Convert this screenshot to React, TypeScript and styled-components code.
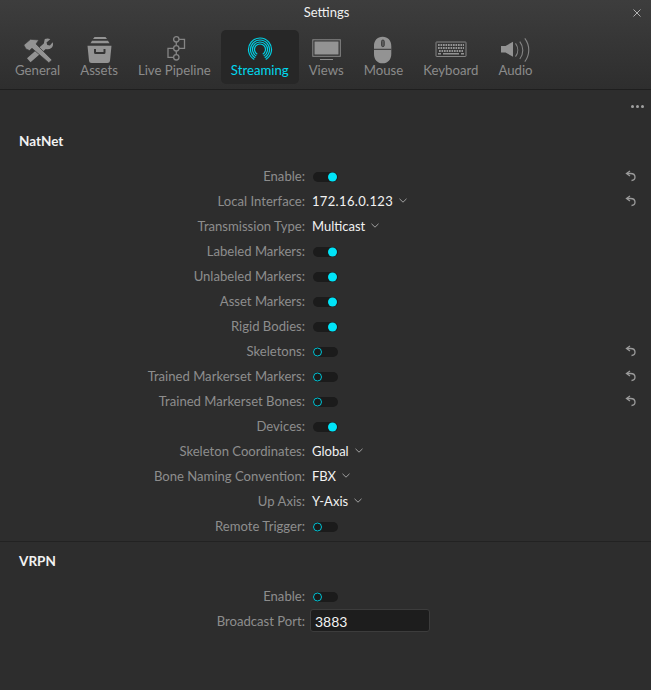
import * as React from "react";
import styled, { createGlobalStyle } from "styled-components";

const GlobalStyle = createGlobalStyle`
  html, body {
    margin: 0;
    padding: 0;
    background: #2d2d2d;
  }
  * {
    box-sizing: border-box;
  }
`;

const Window = styled.div`
  width: 651px;
  height: 690px;
  overflow: hidden;
  background: #2d2d2d;
  font-family: Lato, "Open Sans", sans-serif;
  font-size: 13.1px;
  color: #8d8d8d;
`;

const Header = styled.div`
  height: 90px;
  background: linear-gradient(#3d3d3d, #2e2e2e);
  border-bottom: 1px solid #1e1e1e;
  position: relative;
`;

const Title = styled.div`
  height: 30px;
  padding: 4px 0 0 2px;
  text-align: center;
  color: #f0f0f0;
  font-size: 13px;
  line-height: 16px;
`;

const Close = styled.svg`
  position: absolute;
  top: 9px;
  right: 10px;
  width: 8px;
  height: 8px;
`;

const Tabs = styled.div`
  display: flex;
  padding-left: 5px;
`;

const Tab = styled.div<{ $active?: boolean }>`
  height: 54px;
  padding: 5px 10px 0;
  display: flex;
  flex-direction: column;
  align-items: center;
  border-radius: 5px;
  font-size: 13.2px;
  line-height: 14px;
  white-space: nowrap;
  background: ${(p) => (p.$active ? "#272727" : "transparent")};
  color: ${(p) => (p.$active ? "#00d8ee" : "#8b8b8b")};
`;

const TabIcon = styled.svg`
  width: 32px;
  height: 28px;
  flex: none;
  overflow: visible;
`;

const Toolbar = styled.div`
  height: 41px;
  display: flex;
  justify-content: flex-end;
  align-items: flex-start;
  gap: 2px;
  padding: 15px 7px 0 0;
`;

const Dot = styled.span`
  width: 3px;
  height: 3px;
  border-radius: 50%;
  background: #a0a0a0;
`;

const SectionTitle = styled.div`
  padding-left: 19px;
  height: 20px;
  line-height: 20px;
  font-size: 13.5px;
  font-weight: 700;
  color: #f2f2f2;
`;

const Rows = styled.div<{ $top: number }>`
  margin-top: ${(p) => p.$top}px;
`;

const Row = styled.div`
  height: 25px;
  display: grid;
  grid-template-columns: 305px 1fr 24px;
  align-items: center;
  padding-right: 14px;
`;

const Label = styled.div`
  text-align: right;
  white-space: nowrap;
  line-height: 16px;
`;

const Value = styled.div`
  display: flex;
  align-items: center;
  gap: 6px;
  padding-left: 7px;
  color: #f2f2f2;
  font-size: 13px;
`;

const Address = styled.span`
  letter-spacing: 0.33px;
`;

const ToggleTrack = styled.div`
  position: relative;
  margin: 3px 0 0 1px;
  width: 25px;
  height: 10px;
  border-radius: 5px;
  background: #1b1b1b;
`;

const ToggleKnob = styled.span<{ $on: boolean }>`
  position: absolute;
  top: 50%;
  left: ${(p) => (p.$on ? "15px" : "0")};
  width: 9px;
  height: 9px;
  transform: translateY(-50%);
  border-radius: 50%;
  background: ${(p) => (p.$on ? "#00e4f8" : "#1b1b1b")};
  border: ${(p) => (p.$on ? "none" : "1px solid #00c2d4")};
`;

const ResetIcon = styled.svg`
  width: 12px;
  height: 12px;
  justify-self: end;
`;

const Divider = styled.div`
  height: 1px;
  margin-top: 3px;
  background: #222;
`;

const PortInput = styled.div`
  width: 120px;
  height: 23px;
  margin-left: -2px;
  padding-left: 4px;
  line-height: 23px;
  background: #1d1d1d;
  border: 1px solid #3c3c3c;
  border-radius: 3px;
  color: #f2f2f2;
  font-size: 14px;
`;

const Chevron = () => (
  <svg width="8" height="5" viewBox="0 0 8 5">
    <path d="M.5.8 4 4.2 7.5.8" fill="none" stroke="#a0a0a0" strokeWidth="1" />
  </svg>
);

const Reset = () => (
  <ResetIcon viewBox="0 0 12 12">
    <path d="M5 1 1.5 3.5 5 6" fill="none" stroke="#9a9a9a" strokeWidth="1.3" />
    <path d="M2 3.5h3.5c3 0 4.5 1.6 4.5 3.6S8.6 10.500 6.5 10.500" fill="none" stroke="#9a9a9a" strokeWidth="1.3" />
  </ResetIcon>
);

const Toggle = ({ on }: { on: boolean }) => (
  <ToggleTrack>
    <ToggleKnob $on={on} />
  </ToggleTrack>
);

const G = "#939393";

const tabs = [
  {
    name: "General",
    icon: (
      <>
        <path d="M5 23.300 21.800 8.500 22.800 4c2-.9 4-.8 5.500.2L24.500 7.500l.8 2.500 2.600.6 2.800-3.300c.8 2.400.2 4.500-1.400 5.800-1.500 1.200-3.500 1.500-5.500 1L8.500 27.300z" fill={G} />
        <path d="M1.800 10 8.500 4.300l8.300.7-2.800 4L30 25l-3.200 2.700L10 13.300 7.500 15.500 4 14z" fill={G} stroke="#383838" strokeWidth=".7" />
      </>
    ),
  },
  {
    name: "Assets",
    icon: (
      <>
        <path d="M11.500 2h11l1.500 2H10z" fill={G} />
        <path d="M9 5.700h16l1.500 2.500h-19z" fill={G} />
        <path
          fillRule="evenodd"
          d="M4.500 10.700h24l-1.500 15a2.500 2.500 0 0 1-2.500 2.300h-16A2.500 2.500 0 0 1 6 25.700zM11 14v3.500a1.500 1.500 0 0 0 1.500 1.500h8.500a1.500 1.500 0 0 0 1.500-1.500V14h-2v3h-7.500v-3z"
          fill={G}
        />
      </>
    ),
  },
  {
    name: "Live Pipeline",
    icon: (
      <g fill="none" stroke="#858585" strokeWidth="1.3">
        <circle cx="18.300" cy="4.300" r="2.700" />
        <circle cx="18.300" cy="13.300" r="2.700" />
        <circle cx="18.300" cy="22.300" r="2.700" />
        <path d="M18.300 7v3.600M18.300 16v3.600M21 4.300h5.500v9H21M15.600 13.300H10v9h5.600" />
      </g>
    ),
  },
  {
    name: "Streaming",
    active: true,
    icon: (
      <g fill="none" stroke="#00d0e4" strokeWidth="1.2">
        <path d="M10.250 24.460A11.500 11.500 0 1 1 21.750 24.460" />
        <path d="M11.250 22.730A9.500 9.500 0 1 1 20.750 22.730" />
        <path d="M12.250 21A7.500 7.500 0 1 1 19.750 21" />
        <path d="M13.250 19.260A5.500 5.500 0 1 1 18.750 19.260" />
      </g>
    ),
  },
  {
    name: "Views",
    icon: (
      <>
        <rect x="2.800" y="4.800" width="27.500" height="16.500" fill="none" stroke="#8a8a8a" />
        <rect x="4.500" y="6.500" width="24" height="13" fill={G} />
        <path d="M10 24.500h13" stroke="#8a8a8a" strokeWidth="1" />
      </>
    ),
  },
  {
    name: "Mouse",
    icon: (
      <>
        <path d="M15.600 1.700c-5.300 0-8.600 3.700-8.600 9.300v8c0 5.600 3.300 9.300 8.600 9.300s8.700-3.700 8.700-9.300v-8c0-5.600-3.400-9.300-8.700-9.300z" fill={G} />
        <path d="M7 14.300h17.300" stroke="#363636" strokeWidth="1" />
        <rect x="14.500" y="5" width="2.800" height="6.700" rx="1.400" fill="#5c5c5c" stroke="#363636" strokeWidth=".8" />
      </>
    ),
  },
  {
    name: "Keyboard",
    icon: (
      <>
        <rect x="1" y="7" width="30" height="14.500" rx=".5" fill="none" stroke="#858585" />
        <path
          d="M3 10h26M3 13h26M4 16h24"
          stroke={G}
          strokeWidth="2"
          strokeDasharray="1.700 .8"
        />
        <path d="M3 18.800h3M8 18.800h16M26 18.800h3" stroke={G} strokeWidth="1.600" />
      </>
    ),
  },
  {
    name: "Audio",
    icon: (
      <>
        <path d="M2 11h4.500L14 6.700v15L6.500 17.500H2z" fill={G} />
        <g fill="none" stroke="#858585" strokeWidth="1.100">
          <path d="M16.500 8.300c3 4 3 9.400 0 13.400" />
          <path d="M20.800 6.700c4 5 4 12.300 0 17.300" />
          <path d="M25.800 3.300c5.300 7 5.300 16.400 0 23.400" />
        </g>
      </>
    ),
  },
];

type RowData = {
  label: string;
  toggle?: boolean;
  select?: string;
  reset?: boolean;
};

const natnet: RowData[] = [
  { label: "Enable:", toggle: true, reset: true },
  { label: "Local Interface:", select: "172.16.0.123", reset: true },
  { label: "Transmission Type:", select: "Multicast" },
  { label: "Labeled Markers:", toggle: true },
  { label: "Unlabeled Markers:", toggle: true },
  { label: "Asset Markers:", toggle: true },
  { label: "Rigid Bodies:", toggle: true },
  { label: "Skeletons:", toggle: false, reset: true },
  { label: "Trained Markerset Markers:", toggle: false, reset: true },
  { label: "Trained Markerset Bones:", toggle: false, reset: true },
  { label: "Devices:", toggle: true },
  { label: "Skeleton Coordinates:", select: "Global" },
  { label: "Bone Naming Convention:", select: "FBX" },
  { label: "Up Axis:", select: "Y-Axis" },
  { label: "Remote Trigger:", toggle: false },
];

const SettingRow = ({ label, toggle, select, reset }: RowData) => (
  <Row>
    <Label>{label}</Label>
    <Value>
      {select ? (
        <>
          {/^[\d.]+$/.test(select) ? <Address>{select}</Address> : select}
          <Chevron />
        </>
      ) : (
        <Toggle on={!!toggle} />
      )}
    </Value>
    {reset ? <Reset /> : <span />}
  </Row>
);

export default function App() {
  return (
    <Window>
      <GlobalStyle />
      <Header>
        <Title>Settings</Title>
        <Close viewBox="0 0 8 8">
          <path d="M.5.5l7 7M7.500.5l-7 7" stroke="#b0b0b0" strokeWidth="1" />
        </Close>
        <Tabs>
          {tabs.map((t) => (
            <Tab key={t.name} $active={t.active}>
              <TabIcon viewBox="0 0 32 28">{t.icon}</TabIcon>
              {t.name}
            </Tab>
          ))}
        </Tabs>
      </Header>
      <Toolbar>
        <Dot />
        <Dot />
        <Dot />
      </Toolbar>
      <SectionTitle>NatNet</SectionTitle>
      <Rows $top={12}>
        {natnet.map((r) => (
          <SettingRow key={r.label} {...r} />
        ))}
      </Rows>
      <Divider />
      <Rows $top={9}>
        <SectionTitle>VRPN</SectionTitle>
      </Rows>
      <Rows $top={12}>
        <SettingRow label="Enable:" toggle={false} />
        <Row>
          <Label>Broadcast Port:</Label>
          <Value>
            <PortInput>3883</PortInput>
          </Value>
          <span />
        </Row>
      </Rows>
    </Window>
  );
}
